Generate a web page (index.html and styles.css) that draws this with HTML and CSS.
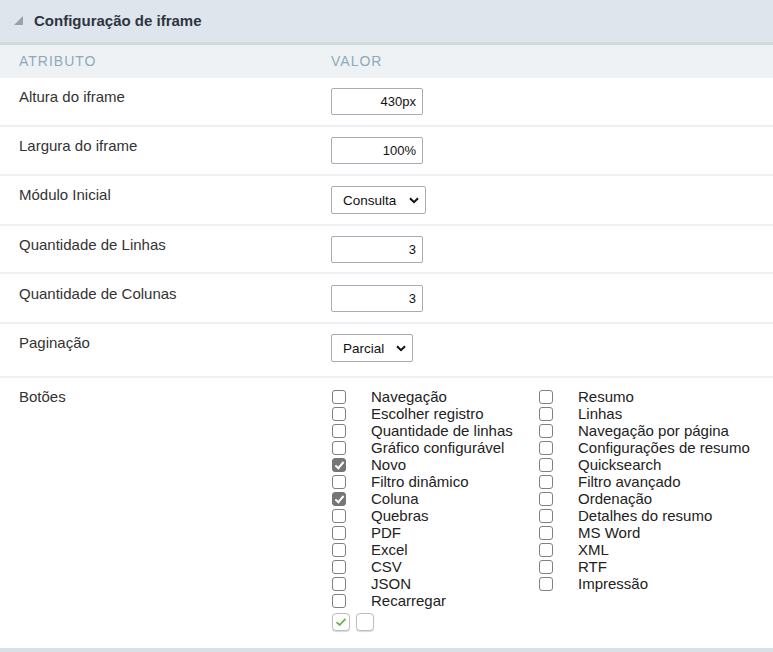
FILE: index.html
```html
<!DOCTYPE html>
<html lang="pt">
<head>
<meta charset="utf-8">
<title>Configuração de iframe</title>
<link rel="stylesheet" href="styles.css">
</head>
<body>
<div class="panel">
  <div class="panel-head">
    <svg class="tri" width="9" height="9" viewBox="0 0 9 9"><polygon points="9,0 9,9 0,9" fill="#9aa1a8"/></svg>
    <span class="title">Configuração de iframe</span>
  </div>
  <div class="thead">
    <div class="c1">ATRIBUTO</div>
    <div class="c2">VALOR</div>
  </div>
  <div class="row">
    <div class="c1">Altura do iframe</div>
    <div class="c2"><input class="txt" type="text" value="430px"></div>
  </div>
  <div class="row">
    <div class="c1">Largura do iframe</div>
    <div class="c2"><input class="txt" type="text" value="100%"></div>
  </div>
  <div class="row row-sel1">
    <div class="c1">Módulo Inicial</div>
    <div class="c2"><div class="sel sel-consulta">Consulta<svg width="10" height="7" viewBox="0 0 10 7"><path d="M1 1.2 L5 5.2 L9 1.2" fill="none" stroke="#111" stroke-width="2"/></svg></div></div>
  </div>
  <div class="row row-short">
    <div class="c1">Quantidade de Linhas</div>
    <div class="c2"><input class="txt" type="text" value="3"></div>
  </div>
  <div class="row row-tall">
    <div class="c1">Quantidade de Colunas</div>
    <div class="c2"><input class="txt" type="text" value="3"></div>
  </div>
  <div class="row row-sel2">
    <div class="c1">Paginação</div>
    <div class="c2"><div class="sel sel-parcial">Parcial<svg width="10" height="7" viewBox="0 0 10 7"><path d="M1 1.2 L5 5.2 L9 1.2" fill="none" stroke="#111" stroke-width="2"/></svg></div></div>
  </div>
  <div class="row row-btns">
    <div class="c1 lbl-btns">Botões</div>
    <div class="c2">
      <div class="cbgrid">
        <span class="cb"></span><span class="cbl">Navegação</span><span class="cb"></span><span class="cbl">Resumo</span>
        <span class="cb"></span><span class="cbl">Escolher registro</span><span class="cb"></span><span class="cbl">Linhas</span>
        <span class="cb"></span><span class="cbl">Quantidade de linhas</span><span class="cb"></span><span class="cbl">Navegação por página</span>
        <span class="cb"></span><span class="cbl">Gráfico configurável</span><span class="cb"></span><span class="cbl">Configurações de resumo</span>
        <span class="cb on"></span><span class="cbl">Novo</span><span class="cb"></span><span class="cbl">Quicksearch</span>
        <span class="cb"></span><span class="cbl">Filtro dinâmico</span><span class="cb"></span><span class="cbl">Filtro avançado</span>
        <span class="cb on"></span><span class="cbl">Coluna</span><span class="cb"></span><span class="cbl">Ordenação</span>
        <span class="cb"></span><span class="cbl">Quebras</span><span class="cb"></span><span class="cbl">Detalhes do resumo</span>
        <span class="cb"></span><span class="cbl">PDF</span><span class="cb"></span><span class="cbl">MS Word</span>
        <span class="cb"></span><span class="cbl">Excel</span><span class="cb"></span><span class="cbl">XML</span>
        <span class="cb"></span><span class="cbl">CSV</span><span class="cb"></span><span class="cbl">RTF</span>
        <span class="cb"></span><span class="cbl">JSON</span><span class="cb"></span><span class="cbl">Impressão</span>
        <span class="cb"></span><span class="cbl">Recarregar</span><span></span><span></span>
      </div>
      <div class="allnone">
        <span class="bx"><svg width="12" height="10" viewBox="0 0 12 10"><path d="M1.5 5.2 L4.6 8 L10.5 1.8" fill="none" stroke="#6cb24f" stroke-width="1.8"/></svg></span>
        <span class="bx"></span>
      </div>
    </div>
  </div>
</div>
</body>
</html>
```

FILE: styles.css
```css
* { box-sizing: border-box; }
html, body { margin: 0; padding: 0; background: #fff; }
body { font-family: "Liberation Sans", Arial, sans-serif; color: #333; }

.panel { width: 773px; height: 652px; border-bottom: 4px solid #d6e1e9; overflow: hidden; }

.panel-head {
  height: 45px;
  background: #dfe5ec;
  border-bottom: 3px solid #cfd9e0;
  display: flex;
  align-items: center;
  padding: 0 0 2px 14px;
}
.tri { margin-right: 11px; margin-top: 1px; }
.title { font-family: "Liberation Sans", Arial, sans-serif; font-weight: bold; font-size: 15px; color: #2d3541; }

.thead {
  height: 33px;
  background: #eff2f5;
  display: flex;
  align-items: center;
  font-family: "Liberation Sans", Arial, sans-serif;
  font-size: 14px;
  letter-spacing: 1px;
  color: #8ea9ba;
  padding-bottom: 1px;
}
.c1 { width: 331px; padding-left: 19px; flex: none; }
.c2 { flex: 1; }

.row {
  display: flex;
  align-items: flex-start;
  border-bottom: 2px solid #eef1f4;
  height: 49px;
  padding-top: 10px;
  font-size: 15px;
}
.row .c1 { line-height: 17px; }
.row-sel1 { height: 50px; padding-top: 10px; }
.row-short { height: 48px; }
.row-tall { height: 50px; padding-top: 11px; }
.row-sel2 { height: 54px; padding-top: 10px; }

.txt {
  display: block;
  width: 92px;
  height: 27px;
  border: 1px solid #a9adb3;
  border-radius: 2px;
  text-align: right;
  font-family: "Liberation Sans", Arial, sans-serif;
  font-size: 13px;
  color: #111;
  padding: 0 6px;
  margin: 0;
  background: #fff;
}

.sel {
  display: flex;
  align-items: center;
  justify-content: space-between;
  height: 28px;
  border: 1px solid #a9adb3;
  border-radius: 2px;
  font-size: 13.5px;
  color: #111;
  padding: 0 6px 0 11px;
  background: #fff;
}
.sel-consulta { width: 95px; }
.sel-parcial { width: 82px; }
.sel svg { margin-top: 1px; }

.row-btns { height: auto; border-bottom: none; padding-top: 10px; padding-bottom: 16px; }

.cbgrid {
  display: grid;
  grid-template-columns: 40px 167px 40px auto;
  grid-auto-rows: 17px;
  align-items: center;
  font-size: 15px;
  line-height: 17px;
  color: #222;
}
.cb {
  width: 14px;
  height: 14px;
  margin-left: 1px;
  border: 1px solid #808080;
  border-radius: 3px;
  background: #fff;
  position: relative;
}
.cb.on { background: #767676; border-color: #767676; }
.cb.on::after {
  content: "";
  position: absolute;
  left: 4px;
  top: 1px;
  width: 3px;
  height: 7px;
  border: solid #fff;
  border-width: 0 2px 2px 0;
  transform: rotate(40deg);
}
.cbl { white-space: nowrap; }

.allnone { display: flex; gap: 6px; margin-top: 4px; margin-left: 1px; }
.bx {
  width: 18px;
  height: 18px;
  border: 1px solid #bdbdbd;
  border-radius: 4px;
  background: #fff;
  box-shadow: 0 1px 1px rgba(0,0,0,0.15);
  display: flex;
  align-items: center;
  justify-content: center;
}
```
